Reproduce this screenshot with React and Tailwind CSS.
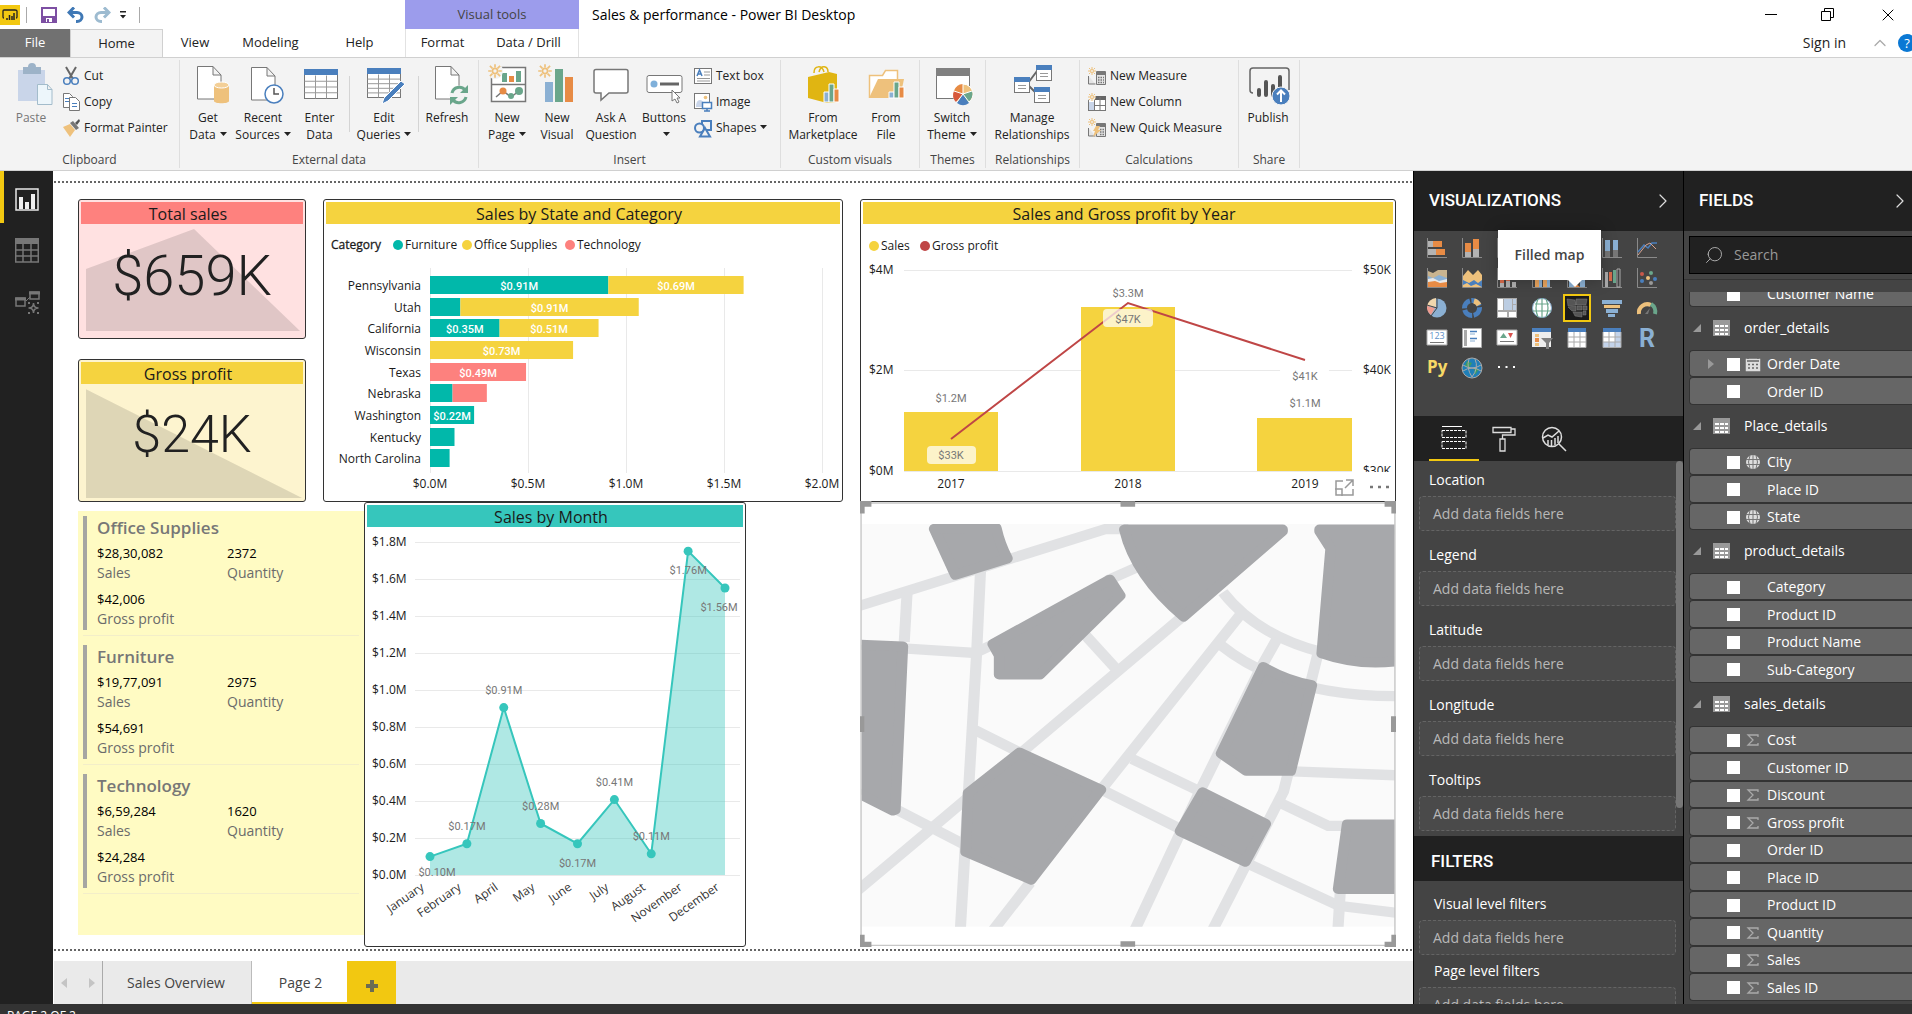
import { ChevronRight, ChevronUp, Search, X } from 'lucide-react';
import clsx from 'clsx';

const TEAL = '#01b8aa';
const GOLD = '#f5d33f';
const CORAL = '#fd817e';

const Caret = () => (
  <svg viewBox="0 0 7 4" className="mb-1 ml-1 inline-block h-1 w-[7px] align-middle" fill="#222">
    <path d="M0 0h7L3.5 4z" />
  </svg>
);

const Sun = ({ x, y, s = 1 }) => (
  <g transform={`translate(${x} ${y}) scale(${s})`} stroke="#eec17c" strokeWidth="2" fill="none">
    <circle r="3" />
    <path d="M0-8V-4M0 8V4M-8 0H-4M8 0H4M-6-6L-3-3M6-6L3-3M-6 6L-3 3M6 6L3 3" />
  </g>
);

const Page = ({ x, y }) => (
  <path transform={`translate(${x} ${y})`} d="M.5.5H16L24 9V33H.5zM16 .5V9H24" fill="#fff" stroke="#777" />
);

const Grid = ({ x, y, w, h, head, rows = 3, cols = 3 }) => (
  <g>
    <rect x={x} y={y} width={w} height={h} fill="#fff" stroke="#777" />
    {Array.from({ length: rows - 1 }, (_, i) => (
      <path key={`r${i}`} d={`M${x} ${y + head + ((h - head) / rows) * (i + 1)}h${w}`} stroke="#999" />
    ))}
    {Array.from({ length: cols - 1 }, (_, i) => (
      <path key={`c${i}`} d={`M${x + (w / cols) * (i + 1)} ${y + head}v${h - head}`} stroke="#999" />
    ))}
    <rect x={x - 0.5} y={y - 0.5} width={w + 1} height={head} fill="#4a7fbd" />
  </g>
);

const ribbonIcons = {
  paste: (
    <>
      <rect x="7" y="5" width="27" height="31" fill="#c9d5e9" />
      <path d="M12 2h5a4 4 0 0 1 8 0h5v7H12z" fill="#9db3c8" />
      <path d="M26.500 19.500h10l4.500 5v15h-14.500zM36.500 19.500v5H41" fill="#edf6fb" stroke="#a3bccb" />
    </>
  ),
  getData: (
    <>
      <Page x={9} y={1} />
      <path d="M26 20v16c0 3 15 3 15 0V20z" fill="#eec17c" />
      <ellipse cx="33.500" cy="20" rx="7.500" ry="3" fill="#f3cf97" stroke="#fff" />
    </>
  ),
  recent: (
    <>
      <Page x={8} y={2} />
      <circle cx="31" cy="29" r="9" fill="#fff" stroke="#4a7fbd" strokeWidth="1.500" />
      <path d="M31 23v6h5" fill="none" stroke="#555" strokeWidth="1.500" />
    </>
  ),
  enter: <Grid x={4.5} y={4.5} w={33} h={29} head={6} rows={4} cols={3} />,
  edit: (
    <>
      <Grid x={3.5} y={3.5} w={33} h={29} head={6} rows={5} cols={3} />
      <path d="M37 16l4 3-17 17-6 3 2-6z" fill="#4a7fbd" stroke="#fff" />
    </>
  ),
  refresh: (
    <>
      <Page x={8} y={1} />
      <circle cx="32" cy="30" r="9.500" fill="#f3f3f3" />
      <path d="M25 28a7.500 7.500 0 0 1 13-3M39 32a7.500 7.500 0 0 1-13 3" fill="none" stroke="#6aa68b" strokeWidth="3" />
      <path d="M41 20v8h-8zM23 40v-8h8z" fill="#6aa68b" />
    </>
  ),
  newPage: (
    <>
      <rect x="4.500" y="2.500" width="34" height="34" fill="#fff" stroke="#777" strokeWidth="1.500" />
      <path d="M4 19.500h35" stroke="#777" strokeWidth="1.500" />
      <rect x="15" y="8" width="5" height="9" fill="#6aa68b" />
      <rect x="22" y="11" width="5" height="6" fill="#e78b45" />
      <rect x="29" y="6" width="5" height="11" fill="#6aa68b" />
      <path d="M9 32l7-6 8 6 8-6" fill="none" stroke="#777" strokeWidth="1.500" />
      <circle cx="16" cy="26" r="3.500" fill="#e78b45" />
      <circle cx="24" cy="31" r="3" fill="#6aa68b" />
      <circle cx="32" cy="26" r="4" fill="#6aa68b" />
      <circle cx="8" cy="6" r="8" fill="#f3f3f3" />
      <Sun x={8} y={6} s={0.85} />
    </>
  ),
  newVisual: (
    <>
      <rect x="8" y="17" width="8" height="20" fill="#8bb0d3" />
      <rect x="18" y="4" width="8" height="33" fill="#6aa68b" />
      <rect x="28" y="12" width="8" height="25" fill="#e78b45" />
      <Sun x={8} y={6} s={0.85} />
    </>
  ),
  ask: (
    <path d="M5 4.500h30q2 0 2 2V26q0 2-2 2H18l-8 7v-7H5q-2 0-2-2V6.500q0-2 2-2z" fill="#fff" stroke="#777" strokeWidth="1.500" />
  ),
  buttons: (
    <>
      <rect x="3" y="10.500" width="35" height="17" rx="2" fill="#fff" stroke="#777" />
      <circle cx="10" cy="19" r="3.500" fill="#7fb0da" />
      <path d="M16 19h19" stroke="#666" strokeWidth="3" />
      <path d="M28 25v11l3-2 2 4 2-1-2-4h3z" fill="#fff" stroke="#777" />
    </>
  ),
  market: (
    <>
      <path d="M11 8c0-8 8-8 10-1M16 7c2-8 9-6 9 0" fill="none" stroke="#e0b512" strokeWidth="1.500" />
      <path d="M5 12l21-5 8 2v28l-10 1-19-5z" fill="#e0b512" />
      <path d="M21 27h5v10h-5z" fill="#8bb0d3" stroke="#fff" />
      <path d="M26 19h5v18h-5z" fill="#6aa68b" stroke="#fff" />
      <path d="M31 24h5v13h-5z" fill="#e78b45" stroke="#fff" />
    </>
  ),
  fromFile: (
    <>
      <path d="M3.500 33V10.500h13l3-5h12V15" fill="#fff" stroke="#eec17c" strokeWidth="1.500" />
      <path d="M3 33l9-19h26l-4 19z" fill="#eec17c" />
      <path d="M23 27h5v6h-5z" fill="#8bb0d3" stroke="#fff" />
      <path d="M28 17h5v16h-5z" fill="#6aa68b" stroke="#fff" />
      <path d="M33 22h5v11h-5z" fill="#e78b45" stroke="#fff" />
    </>
  ),
  theme: (
    <>
      <rect x="4.500" y="4.500" width="33" height="29" fill="#fff" stroke="#777" />
      <rect x="4" y="3" width="34" height="8" fill="#808080" />
      <circle cx="31" cy="29" r="10" fill="#eec17c" stroke="#fff" />
      <path d="M31 29L22 26a10 10 0 0 1 9-7z" fill="#e78b45" />
      <path d="M31 29l-7 8a10 10 0 0 1-2-11z" fill="#d7583b" />
      <path d="M31 29l6 9a10 10 0 0 1-12 0z" fill="#4a7fbd" />
      <path d="M31 29l9-3a10 10 0 0 1-4 11z" fill="#6aa68b" />
      <path d="M31 29v-10M31 29l-9-3M31 29l-6 8M31 29l6 8M31 29l9-3" stroke="#fff" />
    </>
  ),
  manage: (
    <>
      <path d="M16 18l9-12M16 20l9 9" stroke="#666" strokeWidth="2" />
      {[[2, 12], [24, 0], [22, 22]].map(([x, y]) => (
        <g key={x}>
          <rect x={x + 0.5} y={y + 0.5} width="15" height="15" fill="#fff" stroke="#777" />
          <rect x={x} y={y} width="16" height="5" fill="#4a7fbd" />
          <path d={`M${x + 4} ${y + 8.5}h8M${x + 4} ${y + 11.5}h8`} stroke="#999" />
        </g>
      ))}
    </>
  ),
  publish: (
    <>
      <path d="M5 28q-3 0-3-3V6q0-3 3-3h33q3 0 3 3v19" fill="none" stroke="#666" strokeWidth="1.500" />
      <g stroke="#555" strokeWidth="4" strokeLinecap="round">
        <path d="M11 25v5M18 17v13M25 21v9M32 12v14" />
      </g>
      <circle cx="33" cy="31" r="9" fill="#4a7fbd" stroke="#f3f3f3" />
      <path d="M33 37V26M29 29.500l4-4 4 4" fill="none" stroke="#fff" strokeWidth="2" />
    </>
  )
};

const smallIcons = {
  cut: (
    <>
      <path d="M4 0l7 12M14 0L7 12" stroke="#666" strokeWidth="2" />
      <circle cx="5" cy="14" r="3.300" fill="none" stroke="#4a7fbd" strokeWidth="1.500" />
      <circle cx="13" cy="14" r="3.300" fill="none" stroke="#4a7fbd" strokeWidth="1.500" />
    </>
  ),
  copy: (
    <>
      <path d="M1.500.5h6l3 3v11h-9z" fill="#fff" stroke="#777" />
      <path d="M7.500 4.500h6l4 4v9h-10z" fill="#fff" stroke="#777" />
      <path d="M3 5.500h4M3 8.500h4M10 10.500h5M10 13.500h5" stroke="#4a7fbd" />
    </>
  ),
  painter: (
    <>
      <path d="M1 8l7-3 5 6-5 7z" fill="#eec17c" />
      <path d="M8 4l3-2 6 7-3 2z" fill="#777" />
      <path d="M13 4l4-4 1 2-3 4z" fill="#555" />
    </>
  ),
  textBox: (
    <>
      <rect x=".5" y="1.500" width="17" height="15" fill="#fff" stroke="#777" />
      <path d="M3 9l2.500-6L8 9M4 7h3" fill="none" stroke="#4a7fbd" strokeWidth="1.500" />
      <path d="M10 5h6M10 8h6M3 11.500h13M3 14h13" stroke="#999" />
    </>
  ),
  image: (
    <>
      <rect x=".5" y=".5" width="15" height="15" fill="#fff" stroke="#777" />
      <path d="M2 14q0-7 4-7t4 7z" fill="#c9d5e9" />
      <circle cx="11.500" cy="4.500" r="1.800" fill="#eec17c" />
      <path d="M8.500 9.500h9v6h-9zM13 16v2M10 18h6" fill="#fff" stroke="#4a7fbd" strokeWidth="1.500" />
    </>
  ),
  shapes: (
    <>
      <path d="M8 2h9v9H8z" fill="none" stroke="#4a7fbd" strokeWidth="2" />
      <circle cx="5.500" cy="9" r="4.500" fill="#f3f3f3" stroke="#4a7fbd" strokeWidth="2" />
      <path d="M11 9l5 8.500H6z" fill="#f3f3f3" stroke="#4a7fbd" strokeWidth="2" />
    </>
  ),
  measure: (
    <>
      <path d="M.5 9v8h7M8.500 4.500h9v13h-9z" fill="#e4e4e4" stroke="#777" />
      <path d="M8 5h10v3H8z" fill="#777" />
      <path d="M10 10.500h6M10 13h6M10 15.500h6" stroke="#777" strokeDasharray="1.500 1" strokeWidth="1.500" />
      <Sun x={4} y={4} s={0.5} />
    </>
  ),
  column: (
    <>
      <rect x=".5" y="3.500" width="17" height="14" fill="#fff" stroke="#777" />
      <path d="M6 3h12v4H6z" fill="#666" />
      <path d="M1 9h5v8H1z" fill="#c9d5e9" />
      <path d="M6.500 4v13M12 4v13M6 12.500h12" stroke="#777" />
      <circle cx="3.500" cy="4" r="4" fill="#f3f3f3" />
      <Sun x={4} y={4} s={0.5} />
    </>
  ),
  quick: (
    <>
      <path d="M.5 9v8h7M8.500 4.500h9v13h-9z" fill="#e4e4e4" stroke="#777" />
      <path d="M8 5h10v3H8z" fill="#777" />
      <path d="M12 10.500h4M12 13h4M12 15.500h4" stroke="#777" strokeDasharray="1.500 1" strokeWidth="1.500" />
      <path d="M8 7h4l-2 4h3l-8 7 2-6H5z" fill="#eec17c" />
      <Sun x={4} y={3} s={0.5} />
    </>
  )
};

const BigButton = ({ icon, lines, width, drop, muted }) => (
  <button type="button" className={clsx('flex flex-col items-center pt-[5px]', width)}>
    <svg viewBox="0 0 40 40" className="h-10 w-10 shrink-0 overflow-visible">{ribbonIcons[icon]}</svg>
    <span className={clsx('mt-1 text-center text-xs leading-[17px] whitespace-nowrap', muted ? 'text-[#777]' : 'text-[#222]')}>
      {lines[0]}
      <br />
      {lines[1]}
      {drop && <Caret />}
    </span>
  </button>
);

const SmallButtons = ({ items, className }) => (
  <div className={clsx('flex flex-col pt-[3px]', className)}>
    {items.map(([icon, label, drop]) => (
      <button key={label} type="button" className="flex h-[26px] items-center gap-1 text-xs whitespace-nowrap text-[#222]">
        <svg viewBox="0 0 18 18" className="h-[18px] w-[18px] overflow-visible">{smallIcons[icon]}</svg>
        <span>
          {label}
          {drop && <Caret />}
        </span>
      </button>
    ))}
  </div>
);

const Group = ({ label, width, children }) => (
  <section className={clsx('my-0.5 flex shrink-0 flex-col border-r border-[#dedede]', width)}>
    <div className="flex flex-1 pl-1">{children}</div>
    <h3 className="text-center text-xs leading-[17px] text-[#444]">{label}</h3>
  </section>
);

const Ribbon = () => (
  <div className="flex h-[114px] border-y border-[#d0d0d0] bg-[#f3f3f3]">
    <Group label="Clipboard" width="w-[180px]">
      <BigButton icon="paste" lines={['Paste']} width="w-[54px]" muted />
      <SmallButtons items={[['cut', 'Cut'], ['copy', 'Copy'], ['painter', 'Format Painter']]} className="pl-1" />
    </Group>
    <Group label="External data" width="w-[299px]">
      <BigButton icon="getData" lines={['Get', 'Data']} width="w-12" drop />
      <BigButton icon="recent" lines={['Recent', 'Sources']} width="w-[62px]" drop />
      <BigButton icon="enter" lines={['Enter', 'Data']} width="w-[51px]" />
      <i className="mx-1 mt-4 h-14 border-l border-[#d4d4d4]" />
      <BigButton icon="edit" lines={['Edit', 'Queries']} width="w-[60px]" drop />
      <i className="mx-1 mt-4 h-14 border-l border-[#d4d4d4]" />
      <BigButton icon="refresh" lines={['Refresh']} width="w-12" />
    </Group>
    <Group label="Insert" width="w-[302px]">
      <BigButton icon="newPage" lines={['New', 'Page']} width="w-12" drop />
      <BigButton icon="newVisual" lines={['New', 'Visual']} width="w-[52px]" />
      <BigButton icon="ask" lines={['Ask A', 'Question']} width="w-14" />
      <BigButton icon="buttons" lines={['Buttons']} width="w-[50px]" drop />
      <SmallButtons items={[['textBox', 'Text box'], ['image', 'Image'], ['shapes', 'Shapes', true]]} className="pl-[5px]" />
    </Group>
    <Group label="Custom visuals" width="w-[139px]">
      <BigButton icon="market" lines={['From', 'Marketplace']} width="w-[76px]" />
      <BigButton icon="fromFile" lines={['From', 'File']} width="w-[50px]" />
    </Group>
    <Group label="Themes" width="w-[66px]">
      <BigButton icon="theme" lines={['Switch', 'Theme']} width="w-14" drop />
    </Group>
    <Group label="Relationships" width="w-[94px]">
      <BigButton icon="manage" lines={['Manage', 'Relationships']} width="w-[84px]" />
    </Group>
    <Group label="Calculations" width="w-[159px]">
      <SmallButtons items={[['measure', 'New Measure'], ['column', 'New Column'], ['quick', 'New Quick Measure']]} className="pl-1" />
    </Group>
    <Group label="Share" width="w-[61px]">
      <BigButton icon="publish" lines={['Publish']} width="w-[50px]" />
    </Group>
  </div>
);

const tabs = [
  ['View', 'w-[64px]'],
  ['Modeling', 'w-[87px]'],
  ['Help', 'w-[91px]']
];

const TitleBar = () => (
  <header className="flex h-[57px] justify-between bg-white text-[13px] text-[#222]">
    <div className="flex">
      <div className="flex w-[405px] flex-col">
        <div className="flex h-[29px] items-center">
          <svg viewBox="0 0 20 20" className="h-5 w-5">
            <path d="M0 0h20v20H0z" fill="#f2c811" />
            <path d="M4 13q-1 0-1-1V6q0-1 1-1h11q2 0 2 1v6q0 1-1 1" fill="none" stroke="#222" strokeWidth="1.300" />
            <path d="M7 15v-2M9.500 15v-5M12 15v-4M14 15V8" stroke="#222" strokeWidth="1.500" />
          </svg>
          <i className="ml-1.5 h-4 border-l border-[#aaa]" />
          <svg viewBox="0 0 16 16" className="ml-3.5 h-4 w-4">
            <path d="M1 1h14v14H1z" fill="#fff" stroke="#7d4fa3" strokeWidth="2" />
            <path d="M1 9h14v6H1z" fill="#7d4fa3" />
            <path d="M5 11h6v4H5z" fill="#fff" />
            <path d="M6 12h2v3H6z" fill="#7d4fa3" />
          </svg>
          <svg viewBox="0 0 18 16" className="ml-2.5 h-4 w-[18px]" fill="none" stroke="#3f78b5" strokeWidth="3">
            <path d="M3 5.500h7a5 4.500 0 0 1 0 9H9M7 .5L2 5.500l5 5" />
          </svg>
          <svg viewBox="0 0 18 16" className="ml-2 h-4 w-[18px]" fill="none" stroke="#9dbbd0" strokeWidth="3">
            <path d="M15 5.500H8a5 4.500 0 0 0 0 9h1M11 .5l5 5-5 5" />
          </svg>
          <svg viewBox="0 0 8 8" className="ml-2 h-2 w-2" fill="#222">
            <path d="M1 0h6v1.500H1zM1 4h6L4 7.500z" />
          </svg>
          <i className="ml-3 h-4 border-l border-[#aaa]" />
        </div>
        <nav className="flex h-7">
          <button type="button" className="w-[70px] bg-[#717171] text-white">File</button>
          <button type="button" className="-mb-px w-[93px] border border-b-0 border-[#d0d0d0] bg-[#f3f3f3]">Home</button>
          {tabs.map(([label, width]) => (
            <button key={label} type="button" className={width}>{label}</button>
          ))}
        </nav>
      </div>
      <div className="w-[174px]">
        <div className="flex h-[29px] items-center justify-center bg-[#9c9cec] text-[#444]">Visual tools</div>
        <nav className="flex h-7 border-x border-[#e2e2e2]">
          <button type="button" className="w-[73px]">Format</button>
          <button type="button" className="w-[99px]">Data / Drill</button>
        </nav>
      </div>
      <h1 className="pl-[13px] text-sm leading-[29px] text-black">Sales &amp; performance - Power BI Desktop</h1>
    </div>
    <div className="flex flex-col items-end">
      <div className="flex h-[29px] items-center gap-11 pr-3.5 text-black">
        <button type="button" aria-label="Minimize" className="h-px w-3 bg-black" />
        <button type="button" aria-label="Restore">
          <svg viewBox="0 0 13 13" className="h-[13px] w-[13px]" fill="none" stroke="currentColor">
            <path d="M.5 3.500h9v9h-9zM3.500 3V.5h9v9H10" />
          </svg>
        </button>
        <button type="button" aria-label="Close">
          <X className="h-5 w-5" strokeWidth={1.2} />
        </button>
      </div>
      <div className="flex h-7 items-center text-sm">
        <a href="#signin">Sign in</a>
        <ChevronUp className="ml-6 h-5 w-5 text-[#aaa]" strokeWidth={1.5} />
        <button type="button" aria-label="Help" className="-mr-1 ml-2 h-[18px] w-[18px] rounded-full bg-[#0a78d4] text-[13px] leading-[18px] text-white">?</button>
      </div>
    </div>
  </header>
);

const ViewNav = () => (
  <nav className="flex w-[53px] shrink-0 flex-col bg-[#212121]">
    <button type="button" aria-label="Report" className="flex h-[52px] items-center border-l-4 border-[#f2c811] pt-1 pl-[11px]">
      <svg viewBox="0 0 24 23" className="h-[23px] w-6">
        <path d="M1 1h22v21H1z" fill="none" stroke="#e8e8e8" strokeWidth="1.500" />
        <path d="M4 9h4v12H4zM10 14h4v7h-4zM16 6h4v15h-4z" fill="#f0f0f0" />
      </svg>
    </button>
    <button type="button" aria-label="Data" className="flex h-[54px] items-center pl-[15px]">
      <svg viewBox="0 0 24 25" className="h-[25px] w-6">
        <path d="M0 0h24v6H0z" fill="#777" />
        <path d="M.7 1h22.600v23H.7zM0 12h24M0 18h24M8 6v18M16 6v18" fill="none" stroke="#777" strokeWidth="1.500" />
      </svg>
    </button>
    <button type="button" aria-label="Model" className="flex h-[52px] items-center pl-[15px]">
      <svg viewBox="0 0 25 24" className="h-6 w-[25px]" fill="none" stroke="#777">
        <path d="M1 7h9v8H1zM15 1h9v7h-9z" strokeWidth="1.500" />
        <path d="M0 8h11M14 2h11" strokeWidth="3" />
        <path d="M11 10l4-4" />
        <path d="M18.500 12q0 5 5 5-5 0-5 5 0-5-5-5 5 0 5-5z" strokeWidth="1.500" />
        <path d="M13 12h2M22 12h2M13 22h2M22 22h2" strokeWidth="2" />
      </svg>
    </button>
  </nav>
);

const VisualTitle = ({ children, color }) => (
  <h2 className={clsx('h-[22px] pr-2 text-center text-base leading-[25px] whitespace-nowrap text-[#1a1a1a]', color)}>{children}</h2>
);

const KpiCard = ({ title, value, area, card, header, text }) => (
  <article className={clsx('flex flex-col rounded-[3px] border border-[#333] p-0.5', card)}>
    <VisualTitle color={header}>{title}</VisualTitle>
    <div className="relative flex flex-1 items-center justify-center">
      <svg viewBox="0 0 222 112" preserveAspectRatio="none" className="absolute inset-0 h-full w-full">
        <polygon points={area} fill="#212121" fillOpacity=".14" />
      </svg>
      <span className={clsx("relative font-['Roboto',sans-serif] leading-none font-light text-[#212121]", text)}>{value}</span>
    </div>
  </article>
);

const states = [
  ['Pennsylvania', [[0.91, TEAL, '$0.91M'], [0.69, GOLD, '$0.69M']]],
  ['Utah', [[0.155, TEAL], [0.91, GOLD, '$0.91M']]],
  ['California', [[0.355, TEAL, '$0.35M'], [0.505, GOLD, '$0.51M']]],
  ['Wisconsin', [[0.73, GOLD, '$0.73M']]],
  ['Texas', [[0.49, CORAL, '$0.49M']]],
  ['Nebraska', [[0.115, TEAL], [0.175, CORAL]]],
  ['Washington', [[0.225, TEAL, '$0.22M']]],
  ['Kentucky', [[0.125, TEAL]]],
  ['North Carolina', [[0.1, TEAL]]]
];

const StateChart = () => {
  const x0 = 104;
  const perM = 196;
  const band = 195 / states.length;

  return (
    <article className="rounded-[3px] border border-[#333] p-0.5">
      <VisualTitle color="bg-[#f5d33f]">Sales by State and Category</VisualTitle>
      <svg viewBox="0 0 514 275" className="w-full text-xs" fill="#1a1a1a">
        <text x="5" y="25" fontWeight="500" stroke="#1a1a1a" strokeWidth=".3">Category</text>
        {[['Furniture', 72, TEAL], ['Office Supplies', 141, GOLD], ['Technology', 244, CORAL]].map(([label, x, color]) => (
          <g key={label}>
            <circle cx={x} cy="21" r="5" fill={color} />
            <text x={x + 7} y="25">{label}</text>
          </g>
        ))}
        {['$0.0M', '$0.5M', '$1.0M', '$1.5M', '$2.0M'].map((label, i) => (
          <g key={label}>
            <path d={`M${x0 + i * 98}.5 44v205`} stroke="#e9e9e9" />
            <text x={x0 + i * 98} y="264" textAnchor="middle">{label}</text>
          </g>
        ))}
        {states.map(([name, parts], row) => {
          let x = x0;
          const y = Math.round(52 + row * band);
          return (
            <g key={name}>
              <text x="95" y={y + 14} textAnchor="end">{name}</text>
              {parts.map(([value, color, label]) => {
                const start = x;
                const width = value * perM;
                x += width;
                return (
                  <g key={color}>
                    <rect x={start} y={y} width={width} height="18" fill={color} />
                    {label && (
                      <text x={start + width / 2} y={y + 14} textAnchor="middle" fill="#fff" fontWeight="500" className="font-['Roboto',sans-serif] text-[11px]">
                        {label}
                      </text>
                    )}
                  </g>
                );
              })}
            </g>
          );
        })}
      </svg>
    </article>
  );
};

const YearChart = () => (
  <article className="rounded-t-[3px] border border-[#333] p-0.5">
    <VisualTitle color="bg-[#f5d33f]">Sales and Gross profit by Year</VisualTitle>
    <svg viewBox="0 0 530 275" className="w-full text-xs" fill="#1a1a1a">
      <circle cx="11" cy="22" r="5" fill={GOLD} />
      <text x="18" y="26">Sales</text>
      <circle cx="62" cy="22" r="5" fill="#bf4646" />
      <text x="69" y="26">Gross profit</text>
      {[['$4M', '$50K', 46], ['$2M', '$40K', 146], ['$0M', '', 247]].map(([left, right, y]) => (
        <g key={left}>
          <path d={`M41 ${y}.5h448`} stroke="#e9e9e9" />
          <text x="6" y={y + 4}>{left}</text>
          <text x="500" y={y + 4}>{right}</text>
        </g>
      ))}
      <svg x="500" y="235" width="30" height="13">
        <text x="0" y="16">$30K</text>
      </svg>
      <path d="M41 188h94v59H41zM218 83h94v164h-94zM394 194h95v53h-95z" fill={GOLD} />
      <path d="M88 215L265 79l177 57" fill="none" stroke="#bf4646" strokeWidth="2" />
      <rect x="64" y="222" width="49" height="18" rx="4" fill="#fff" fillOpacity=".72" />
      <rect x="240" y="85" width="50" height="18" rx="4" fill="#fff" fillOpacity=".72" />
      <rect x="417" y="143" width="49" height="18" rx="4" fill="#fff" />
      <g fill="#777" textAnchor="middle" className="font-['Roboto',sans-serif] text-[11px]">
        <text x="88" y="178">$1.2M</text>
        <text x="88" y="235">$33K</text>
        <text x="265" y="73">$3.3M</text>
        <text x="265" y="99">$47K</text>
        <text x="442" y="156">$41K</text>
        <text x="442" y="183">$1.1M</text>
      </g>
      <g textAnchor="middle">
        <text x="88" y="264">2017</text>
        <text x="265" y="264">2018</text>
        <text x="442" y="264">2019</text>
      </g>
      <path d="M480 257h-7v14h17v-6M472 265h7v7M483 256h7v6M482 264l8-8" fill="none" stroke="#999" strokeWidth="1.500" />
      <path d="M507 263h3M515 263h3M523 263h3" stroke="#777" strokeWidth="2.500" />
    </svg>
  </article>
);

const categories = [
  ['Office Supplies', '$28,30,082', '2372', '$42,006'],
  ['Furniture', '$19,77,091', '2975', '$54,691'],
  ['Technology', '$6,59,284', '1620', '$24,284']
];

const Measure = ({ value, label }) => (
  <div className="flex flex-col-reverse">
    <dt className="text-sm leading-5 text-[#6b6b6b]">{label}</dt>
    <dd className="text-[13px] leading-5 text-black">{value}</dd>
  </div>
);

const CategoryCards = () => (
  <article className="mt-[9px] mb-3 flex flex-col bg-[#fffbc3] px-[5px] pt-[5px]">
    {categories.map(([name, sales, quantity, profit]) => (
      <section key={name} className="mb-[9px] border-b border-[#f3eec9] pb-[5px]">
        <div className="h-[114px] border-l-4 border-[#a6a6a2] pl-[10px]">
          <h3 className="text-[17px] leading-[24px] font-semibold text-[#777]">{name}</h3>
          <dl className="grid grid-cols-[130px_1fr] gap-y-1.5 pt-[3px]">
            <Measure value={sales} label="Sales" />
            <Measure value={quantity} label="Quantity" />
            <Measure value={profit} label="Gross profit" />
          </dl>
        </div>
      </section>
    ))}
  </article>
);

// month, value in millions, label text and its offset from the point
const months = [
  ['January', 0.1, '$0.10M', 7, 19],
  ['February', 0.17, '$0.17M', 0, -14],
  ['April', 0.91, '$0.91M', 0, -14],
  ['May', 0.28, '$0.28M', 0, -13],
  ['June', 0.17, '$0.17M', 0, 23],
  ['July', 0.41, '$0.41M', 0, -14],
  ['August', 0.115, '$0.11M', 0, -14],
  ['November', 1.76, '$1.76M', 0, 23],
  ['December', 1.56, '$1.56M', -6, 23]
];

const MonthChart = () => {
  const points = months.map(([, value], i) => [63 + (i * 295) / 8, 348 - value * 184]);
  const line = points.map((point) => point.join(' ')).join('L');

  return (
    <article className="rounded-[3px] border border-[#333] p-0.5">
      <VisualTitle color="bg-[#36c6bc]">Sales by Month</VisualTitle>
      <svg viewBox="0 0 376 417" className="w-full text-xs" fill="#1a1a1a">
        {Array.from({ length: 10 }, (_, i) => (
          <g key={i}>
            <path d={`M48 ${15 + i * 37}.5h325`} stroke="#e9e9e9" />
            <text x="5" y={19 + i * 37}>{`$${(1.8 - i * 0.2).toFixed(1)}M`}</text>
          </g>
        ))}
        <path d={`M63 348L${line}L358 348z`} fill="#36c6bc" fillOpacity=".4" />
        <path d={`M${line}`} fill="none" stroke="#36c6bc" strokeWidth="2" />
        {months.map(([name, , label, dx, dy], i) => {
          const [x, y] = points[i];
          return (
            <g key={name}>
              <circle cx={x} cy={y} r="4.500" fill="#36c6bc" />
              <text x={x + dx} y={y + dy} textAnchor="middle" fill="#777" className="font-['Roboto',sans-serif] text-[11px]">{label}</text>
              <text transform={`translate(${x - 5} 362) rotate(-35)`} textAnchor="end" fill="#333">{name}</text>
            </g>
          );
        })}
      </svg>
    </article>
  );
};

const roads = [
  'M20 333L715 100H780', 'M366 220L355 470 309 1310', 'M160 290L152 440', 'M160 460L350 473 400 448',
  'M720 255L810 212', 'M930 365L230 1000 20 1190', 'M660 420L745 520', 'M350 705L480 775', 'M130 945L320 1050',
  'M1092 360L700 890M505 1165L400 1310', 'M1045 290Q1140 420 1320 470', 'M1040 450Q1220 605 1540 603',
  'M1197 430L1150 520 980 890 797 1310', 'M1310 480L1215 890 1110 1110 1015 1310', 'M790 792L990 895',
  'M715 890L925 1003', 'M1240 830L1540 842', 'M1206 925L1340 994H1390', 'M1115 1108L1370 1235 1540 1257', 'M1374 1190L1367 1310'
];

const blocks = [
  'M236 99L410 97Q420 145 441 188L295 237z',
  'M769 101H1212V106L935 363Q800 240 769 101z',
  'M1316 101H1550V495Q1430 515 1322 474L1347 158 1316 106z',
  'M728 252L757 300 532 538H418V480L400 446z',
  'M10 447L148 453 127 945 120 948 10 888z',
  'M475 773L703 885 508 1156 324 1072 331 895z',
  'M1158 515Q1220 555 1294 570L1235 828H1110L1040 776z',
  'M988 893L1165 988 1108 1102 925 1010z',
  'M1393 990H1550V1184H1368z'
];

const MapVisual = () => (
  <article className="col-start-4 h-[445px]">
    <svg viewBox="28 18 1502 1341" preserveAspectRatio="none" className="h-full w-full overflow-visible">
      <clipPath id="mapArea">
        <path d="M32 84h1495v1214H32z" />
      </clipPath>
      <g clipPath="url(#mapArea)">
        <path d="M32 84h1495v1214H32z" fill="#fafafa" />
        {roads.map((d) => (
          <path key={d} d={d} fill="none" stroke="#e1e2e4" strokeWidth="31" />
        ))}
        {blocks.map((d) => (
          <path key={d} d={d} fill="#a7a8ab" stroke="#a7a8ab" strokeWidth="30" strokeLinejoin="round" />
        ))}
      </g>
      <path d="M31 21h1496v1333H31z" fill="none" stroke="#c8c8c8" strokeWidth="4" />
      <g fill="#999">
        <path d="M28 15h32v17H41v21H28zM1530 15h-32v17h19v21h13zM28 1359h32v-16H41v-21H28zM1530 1359h-32v-16h19v-21h13z" />
        <path d="M758 16h41v16h-41zM758 1342h41v16h-41zM28 664h12v47H28zM1516 664h14v47h-14z" />
      </g>
    </svg>
  </article>
);

const dotted = 'h-0.5 shrink-0 bg-[repeating-linear-gradient(90deg,#666_0_2px,transparent_2px_4px)]';

const Report = () => (
  <main className="flex min-w-0 flex-1 flex-col bg-white pl-px">
    <div className={clsx('mt-[10px]', dotted)} />
    <div className="min-h-0 flex-1 pt-4 pr-[17px] pl-6">
      <div className="grid grid-cols-[228fr_520fr_536fr] gap-x-[17px]">
        <div className="flex flex-col gap-5">
          <KpiCard title="Total sales" value="$659K" area="5,45 113,5 219,107 5,107" card="h-[140px] bg-[#ffe1e1]" header="bg-[#fe817e]" text="pb-2 text-[56px]" />
          <KpiCard title="Gross profit" value="$24K" area="5,5 221,111 5,111" card="h-[143px] bg-[#fdf4cf]" header="bg-[#f5d33f]" text="pb-3.5 text-[52px]" />
        </div>
        <StateChart />
        <YearChart />
      </div>
      <div className="grid grid-cols-[286fr_382fr_114fr_536fr]">
        <CategoryCards />
        <MonthChart />
        <MapVisual />
      </div>
    </div>
    <div className={dotted} />
    <nav className="mt-[10px] flex h-[43px] shrink-0 bg-[#eaeaea] text-sm text-[#444]">
      <div className="flex w-[49px] items-center justify-between border-r border-[#aaa] px-[7px]">
        <button type="button" aria-label="Previous page">
          <svg viewBox="0 0 6 10" className="h-2.5 w-1.5" fill="#c4c4c4"><path d="M6 0v10L0 5z" /></svg>
        </button>
        <button type="button" aria-label="Next page">
          <svg viewBox="0 0 6 10" className="h-2.5 w-1.5" fill="#c4c4c4"><path d="M0 0v10l6-5z" /></svg>
        </button>
      </div>
      <button type="button" className="w-[149px] border-r border-[#bbb] pr-0.5">Sales Overview</button>
      <button type="button" className="w-[95px] border-b-2 border-[#f2c811] bg-white pt-0.5 pl-0.5">Page 2</button>
      <button type="button" aria-label="New page" className="flex w-[49px] items-center justify-center bg-[#f2c811] pt-1.5">
        <svg viewBox="0 0 14 14" className="h-3.5 w-3.5"><path d="M7 1v12M1 7h12" stroke="#6b6b52" strokeWidth="4" /></svg>
      </button>
    </nav>
  </main>
);

const Axis = () => <path d="M.5 0v19.500H20" fill="none" stroke="#8a8a8a" />;

const vizIcons = [
  ['Stacked bar', <><Axis /><path d="M1 3h5v6H1zM1 11h8v6H1z" fill="#b3b3b3" /><path d="M6 3h9v6H6zM9 11h9v6H9z" fill="#e78b45" /></>],
  ['Stacked column', <><Axis /><path d="M3 14h6v5H3zM11 11h6v8h-6z" fill="#b3b3b3" /><path d="M3 5h6v9H3zM11 1h6v10h-6z" fill="#e78b45" /></>],
  ['Clustered bar', <><Axis /><path d="M1 3h9v4H1z" fill="#8bb0d3" /></>],
  ['Clustered column', <><Axis /><path d="M3 5h5v14H3z" fill="#8bb0d3" /></>],
  ['100% bar', <><Axis /><path d="M1 3h17v5H1z" fill="#8bb0d3" /></>],
  ['100% column', <><Axis /><path d="M3 13h5v6H3zM11 12h5v7h-5z" fill="#777" /><path d="M3 2h5v11H3zM11 2h5v10h-5z" fill="#8bb0d3" /></>],
  ['Line', <><Axis /><path d="M1 14L7 7l4 3 4-5 5 0" fill="none" stroke="#4a7fbd" strokeWidth="1.500" /><path d="M1 17l8-10 4-2 6 6" fill="none" stroke="#d9a38f" /></>],
  ['Area', <><path d="M1 3l5 2 5-3h9v17H1z" fill="#c9b48f" /><path d="M1 8l5 2 6-3 8 3v9H1z" fill="#8bb0d3" /><path d="M1 11l5-1 6 3 8-2v8H1z" fill="#e8e8e8" /><path d="M1 14l7-1 5 2 7-1v5H1z" fill="#e78b45" /><Axis /></>],
  ['Stacked area', <><path d="M1 8l5-6 5 5 5-5 4 5v12H1z" fill="#eec17c" /><path d="M1 12l6 3 5-3 4 3 4-3v7H1z" fill="#4a7fbd" /><path d="M1 17l4-2 4 3 5-2 6 3H1z" fill="#eec17c" /><Axis /></>],
  ['Line and stacked column', <><Axis /><path d="M3 13h4v6H3zM9 11h4v8H9zM15 14h4v5h-4z" fill="#b3b3b3" /><path d="M3 12h4v3H3zM9 9h4v4H9z" fill="#d66a4a" /></>],
  ['Line and clustered column', <><Axis /><path d="M3 10h4v9H3zM11 11h4v8h-4z" fill="#e9a45d" /><path d="M7 12h3v7H7zM15 10h3v9h-3z" fill="#8bb0d3" /></>],
  ['Ribbon', <><Axis /><path d="M2 10h5v9H2zM13 10h5v9h-5z" fill="#8bb0d3" /><path d="M7 14l6 5H7z" fill="#e78b45" /></>],
  ['Waterfall', <><Axis /><path d="M3 4h3v15H3z" fill="#aaa" /><path d="M7 4h3v9H7z" fill="#d66a4a" /><path d="M11 2h3v13h-3z" fill="#6aa68b" /><path d="M15 1h3v18h-3z" fill="none" stroke="#aaa" /></>],
  ['Scatter', <><Axis /><g fill="#4a7fbd"><circle cx="5" cy="13" r="2" /><circle cx="18" cy="11" r="2" /></g><circle cx="5" cy="6" r="2" fill="#c9584a" /><circle cx="11" cy="10" r="2" fill="#eec17c" /><circle cx="14" cy="5" r="2" fill="#6aa68b" /><circle cx="14" cy="15" r="2" fill="#999" /></>],
  ['Pie', <><circle cx="10" cy="10" r="9.500" fill="#8bb0d3" /><path d="M9 9V0A10 10 0 0 0 0 8z" fill="#f1d7ae" /><path d="M8 10L0 8a10 10 0 0 0 4 9z" fill="#ee9c90" /><path d="M10 10V0M10 10L0 7M10 10l-6 8" stroke="#444" /></>],
  ['Donut', <><circle cx="10" cy="10" r="7.500" fill="none" stroke="#4a7fbd" strokeWidth="5" strokeDasharray="10 1.500" /><path d="M12 3a8 8 0 0 1 5 4" stroke="#eec17c" strokeWidth="5" fill="none" /></>],
  ['Treemap', <><path d="M0 0h20v20H0z" fill="#aaa" /><path d="M1 1h5v11H1zM1 14h9v5H1zM12 14h7v5h-7z" fill="#fff" /><path d="M7 1h8v11H7zM16 1h3v5h-3zM16 7h3v5h-3z" fill="#bccde2" /></>],
  ['Map', <><circle cx="10" cy="10" r="9.500" fill="#fff" stroke="#8bb0d3" /><path d="M3 6h14M1 13h18M10 0v20M6 1q-4 9 0 18M14 1q4 9 0 18" fill="none" stroke="#6aa68b" strokeWidth="1.200" /></>],
  ['Filled map', <><path d="M-2-2h24v24H-2z" fill="#1b1b1b" /><path d="M0 1l8 1 1 5-8 1zM9 1h11l-1 6H9zM1 9l8-1v5H5zM10 8h5v4h-5zM16 8h4v4h-4zM6 14h9v5l-7-1zM16 13h3v4h-3z" fill="#555" stroke="#808080" strokeWidth=".5" /></>],
  ['Funnel', <><path d="M0 2h20v4H0z" fill="#8bb0d3" /><path d="M2 7h16v3H2z" fill="#eec17c" /><path d="M4 11h12v4H4zM6 16h7v3H6z" fill="#8bb0d3" /></>],
  ['Gauge', <><path d="M2 16a8.500 8.500 0 0 1 12-9" fill="none" stroke="#eec17c" strokeWidth="4" /><path d="M14 6a9 9 0 0 1 4 10" fill="none" stroke="#6aa68b" strokeWidth="4" /><path d="M8 16l5-6-2 6z" fill="#777" /></>],
  ['Card', <><path d="M0 2h20v15H0z" fill="#fff" stroke="#aaa" /><text x="10" y="11" textAnchor="middle" fill="#5d90c8" fontSize="9">123</text><path d="M3 14.500h14" stroke="#777" /></>],
  ['Multi-row card', <><path d="M.5.5h19v19H.5z" fill="#fff" stroke="#aaa" /><path d="M2 2h3v16H2z" fill="#aaa" /><path d="M8 3.500h7M8 10.500h7" stroke="#4a7fbd" strokeWidth="1.500" /><path d="M8 6h5M8 13h5" stroke="#8bb0d3" /></>],
  ['KPI', <><path d="M0 2h20v15H0z" fill="#fff" stroke="#aaa" /><path d="M3 10l3.500-5 3.500 5z" fill="#6aa68b" /><path d="M11 5h5l-2.500 5z" fill="#d9534f" /><path d="M3 13.500h14" stroke="#777" /></>],
  ['Slicer', <><path d="M0 1h19v18H0z" fill="#eee" /><path d="M0 0h19v4H0z" fill="#4a7fbd" /><path d="M3 6h4v3H3zM3 15h4v3H3z" fill="#eec17c" /><path d="M3 10h4v4H3z" fill="#e78b45" /><path d="M9 10h12l-4 5v6h-3v-6z" fill="#808080" /></>],
  ['Table', <><path d="M1 1h18v18H1z" fill="#fff" /><path d="M1 0h18v4H1z" fill="#4a7fbd" /><path d="M1 9h18M1 14h18M7 4v16M13 4v16M1 4v15.500h18V4" fill="none" stroke="#aaa" /></>],
  ['Matrix', <><path d="M1 1h18v18H1z" fill="#fff" /><path d="M13 4h6v15H1v-5h12z" fill="#c3d3ea" /><path d="M1 0h18v4H1z" fill="#4a7fbd" /><path d="M1 9h18M1 14h18M7 4v16M13 4v16M1 4v15.500h18V4" fill="none" stroke="#aaa" /></>],
  ['R script', <text x="2" y="19" fill="#8bb0d3" fontSize="25" fontWeight="700" className="font-['Roboto',sans-serif]">R</text>],
  ['Python script', <text x="0" y="15" fill="#f7d966" fontSize="17" fontWeight="700" className="font-['Open_Sans',sans-serif]">Py</text>],
  ['ArcGIS map', <><circle cx="10" cy="10" r="10" fill="#1f7fb8" stroke="#aaa" /><path d="M5 3l5 2-3 5-4-2zM12 10l5 1-4 6z" fill="#3d9b63" /><path d="M1 7q9 6 18 0M1 13q9-6 18 0M7 1q-3 9 3 18M13 1q4 9-3 18" fill="none" stroke="#aaa" /></>],
  ['More visuals', <path d="M1 9h2M8.500 9h2M16 9h2" stroke="#fff" strokeWidth="2" />]
];

const PanelHeader = ({ children }) => (
  <div className="flex h-[60px] items-center justify-between bg-[#212121] pr-2 pl-[15px]">
    <h2 className="font-['Roboto',sans-serif] text-[17px] font-medium text-white">{children}</h2>
    <ChevronRight className="h-6 w-6 text-[#ddd]" strokeWidth={1.2} />
  </div>
);

const DropWell = () => (
  <div className="flex h-[35px] items-center rounded-[4px] border border-dashed border-[#646464] bg-[#4a4a4a] pl-[13px] text-sm text-[#b8b8b8]">
    Add data fields here
  </div>
);

const Visualizations = () => (
  <aside className="flex w-[271px] shrink-0 flex-col overflow-hidden border-x border-black bg-[#444] text-white">
    <PanelHeader>VISUALIZATIONS</PanelHeader>
    <ul className="grid h-[185px] shrink-0 grid-cols-[repeat(7,35px)] auto-rows-[30px] pt-0.5 pl-[5px]">
      {vizIcons.map(([name, art]) => {
        const active = name === 'Filled map';
        return (
          <li key={name} className="relative flex items-center justify-center">
            <button type="button" aria-label={name} className={clsx(active && 'outline-2 outline-offset-2 outline-[#f2c811]')}>
              <svg viewBox="0 0 20 20" className="h-5 w-5 overflow-visible">{art}</svg>
            </button>
            {active && (
              <div role="tooltip" className="absolute bottom-[43px] left-[-61px] flex h-[50px] w-[103px] items-center justify-center bg-white text-sm font-semibold whitespace-nowrap text-[#444] shadow-[0_0_16px_rgba(0,0,0,0.25)]">
                Filled map
                <svg viewBox="0 0 14 7" className="absolute top-full left-[70px] h-[7px] w-3.5" fill="#fff"><path d="M0 0h14L7 7z" /></svg>
              </div>
            )}
          </li>
        );
      })}
    </ul>
    <div className="flex h-[45px] shrink-0 bg-[#212121] pl-[15px]">
      <button type="button" aria-label="Fields" className="flex w-[50px] items-center justify-center border-b-2 border-[#f2c811]">
        <svg viewBox="0 0 26 25" className="h-[25px] w-[26px]" fill="none" stroke="#fff">
          <path d="M1 1.500h20" />
          <path d="M1 5.500h24v7H1zM1 16.500h24v7H1z" strokeDasharray="3 1" />
        </svg>
      </button>
      <button type="button" aria-label="Format" className="flex w-[50px] items-center justify-center">
        <svg viewBox="0 0 24 26" className="h-[26px] w-6" fill="none" stroke="#ddd" strokeWidth="1.300">
          <path d="M1 1.500h18v5H1zM19 3h4v6H10.500v4M8 13h5v12H8z" />
        </svg>
      </button>
      <button type="button" aria-label="Analytics" className="flex w-[50px] items-center justify-center">
        <svg viewBox="0 0 26 26" className="h-[26px] w-[26px]" fill="none" stroke="#ddd" strokeWidth="1.500">
          <circle cx="11" cy="11" r="9.500" />
          <path d="M18 18l7 7M2 12l5-3 4 2 7-6M7 19v-5M10.500 20v-6M14 19v-7M17 17v-7" />
        </svg>
      </button>
    </div>
    <div className="flex h-[375px] shrink-0">
      <div className="flex-1 pl-[5px]">
        {['Location', 'Legend', 'Latitude', 'Longitude', 'Tooltips'].map((name) => (
          <section key={name} className="h-[75px]">
            <h3 className="h-[35px] pl-[10px] text-sm leading-[37px]">{name}</h3>
            <DropWell />
          </section>
        ))}
      </div>
      <div className="h-[347px] w-[7px] rounded-full bg-[#777]" />
    </div>
    <h2 className="h-[45px] shrink-0 bg-[#212121] pl-[17px] font-['Roboto',sans-serif] text-[17px] leading-[50px] font-medium">FILTERS</h2>
    <div className="min-h-0 flex-1 pr-[7px] pl-[5px]">
      {['Visual level filters', 'Page level filters'].map((name) => (
        <section key={name} className="h-[67px]">
          <h3 className="h-[39px] pl-[15px] text-sm leading-[45px]">{name}</h3>
          <DropWell />
        </section>
      ))}
    </div>
  </aside>
);

const tables = [
  ['order_details', [['Order Date', 'date'], ['Order ID']]],
  ['Place_details', [['City', 'globe'], ['Place ID'], ['State', 'globe']]],
  ['product_details', [['Category'], ['Product ID'], ['Product Name'], ['Sub-Category']]],
  [
    'sales_details',
    [['Cost', 'sum'], ['Customer ID'], ['Discount', 'sum'], ['Gross profit', 'sum'], ['Order ID'], ['Place ID'], ['Product ID'], ['Quantity', 'sum'], ['Sales', 'sum'], ['Sales ID', 'sum']]
  ]
];

const fieldIcons = {
  date: <path d="M0 2h16v14H0zM3 0v3M13 0v3M2 5h12M3 8.500h2M7 8.500h2M11 8.500h2M3 12h2M7 12h2M11 12h2" fill="#ddd" stroke="#666" strokeWidth="1.500" />,
  globe: (
    <>
      <circle cx="8" cy="8" r="7" fill="#ddd" />
      <path d="M1 5.500h14M1 10.500h14M8 1v14M5 1.500q-3 6.500 0 13M11 1.500q3 6.500 0 13" fill="none" stroke="#777" />
    </>
  ),
  sum: <path d="M13 5V3H3l5 5-5 5h10v-2" fill="none" stroke="#aaa" strokeWidth="1.300" />
};

const FieldRow = ({ name, icon }) => (
  <li className="flex h-[27px] shrink-0 items-center rounded-l-[4px] border border-r-0 border-[#333] bg-[#666] even:h-7">
    <svg viewBox="0 0 6 10" className="ml-[18px] h-2.5 w-1.5">{icon === 'date' && <path d="M0 0l6 5-6 5z" fill="#999" />}</svg>
    <label className="flex items-center pt-px text-sm text-white">
      <input type="checkbox" className="ml-[13px] h-[13px] w-[13px] appearance-none bg-white" />
      <svg viewBox="0 0 16 16" className="mr-1.5 ml-[5px] h-4 w-4">{fieldIcons[icon]}</svg>
      {name}
    </label>
  </li>
);

const Fields = () => (
  <aside className="flex w-[228px] shrink-0 flex-col overflow-hidden bg-[#444] text-white">
    <div className="-mr-2">
      <PanelHeader>FIELDS</PanelHeader>
    </div>
    <div className="border-b border-[#333] py-[5px] pl-[5px]">
      <label className="flex h-[38px] items-center border border-r-0 border-black bg-[#212121] pl-3.5">
        <Search className="h-5 w-5 -scale-x-100 text-[#aaa]" strokeWidth={1.2} />
        <input type="text" placeholder="Search" className="ml-[10px] w-32 bg-transparent text-sm placeholder:text-[#999]" />
      </label>
    </div>
    <div className="mt-3 min-h-0 flex-1 overflow-hidden pl-[5px]">
      <ul className="flex h-[15px] flex-col justify-end overflow-hidden">
        <FieldRow name="Customer Name" />
      </ul>
      {tables.map(([table, fields]) => (
        <section key={table}>
          <h3 className="flex h-[43px] items-center pb-0.5 pl-1 text-sm">
            <svg viewBox="0 0 8 8" className="h-2 w-2"><path d="M8 0v8H0z" fill="#999" /></svg>
            <svg viewBox="0 0 17 16" className="mr-3.5 ml-3 h-4 w-[17px]">
              <path d="M0 0h17v16H0z" fill="#999" />
              <path d="M2 5h4v2H2zM7 5h4v2H7zM12 5h3v2h-3zM2 9h4v2H2zM7 9h4v2H7zM12 9h3v2h-3zM2 13h4v2H2zM7 13h4v2H7zM12 13h3v2h-3z" fill="#fff" />
            </svg>
            {table}
          </h3>
          <ul>
            {fields.map(([name, icon]) => (
              <FieldRow key={name} name={name} icon={icon} />
            ))}
          </ul>
        </section>
      ))}
    </div>
  </aside>
);

export default function App() {
  return (
    <div className="flex h-screen flex-col overflow-hidden bg-white font-['Open_Sans','Noto_Sans',sans-serif]">
      <TitleBar />
      <Ribbon />
      <div className="flex min-h-0 flex-1">
        <ViewNav />
        <Report />
        <Visualizations />
        <Fields />
      </div>
      <footer className="h-[10px] shrink-0 overflow-hidden bg-[#333] pt-1 pl-[7px] text-xs text-white">PAGE 2 OF 2</footer>
    </div>
  );
}
